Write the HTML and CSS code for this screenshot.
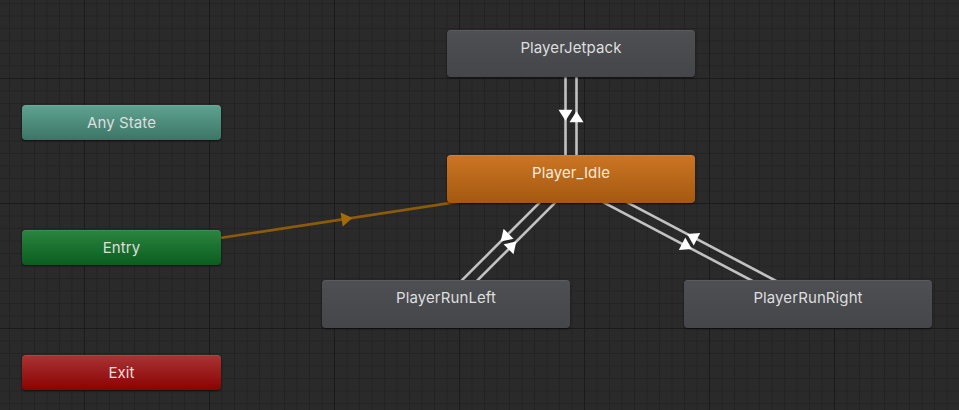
FILE: index.html
```html
<!DOCTYPE html>
<html lang="en">
<head>
    <meta charset="UTF-8">
    <title>Animator - Player</title>
    <link rel="stylesheet" href="styles.css">
</head>
<body>
    <div class="graph">
        <!-- grid + transitions layer -->
        <svg class="edges" width="959" height="410" viewBox="0 0 959 410">
            <defs>
                <pattern id="minor" x="9" y="3" width="12.5" height="12.5" patternUnits="userSpaceOnUse">
                    <rect x="0" y="0" width="1" height="12.5" fill="#232323"/>
                    <rect x="0" y="0" width="12.5" height="1" fill="#232323"/>
                </pattern>
                <pattern id="major" x="84" y="78" width="125" height="125" patternUnits="userSpaceOnUse">
                    <rect x="0" y="0" width="1" height="125" fill="#1b1b1b"/>
                    <rect x="0" y="0" width="125" height="1" fill="#1b1b1b"/>
                </pattern>
            </defs>
            <rect width="959" height="410" fill="url(#minor)" shape-rendering="crispEdges"/>
            <rect width="959" height="410" fill="url(#major)" shape-rendering="crispEdges"/>

            <!-- Entry -> Player_Idle -->
            <line class="entry-line" x1="122.3" y1="252.9" x2="571.8" y2="184.4"/>
            <polygon class="entry-head" points="352.5,217.9 342.7,226.4 340.6,212.6"/>

            <!-- PlayerJetpack <-> Player_Idle -->
            <line class="tr-line" x1="565.5" y1="53.5" x2="565.5" y2="179"/>
            <line class="tr-line" x1="576.5" y1="53.5" x2="576.5" y2="179"/>
            <polygon class="tr-head" points="565.5,120.8 558.5,109.8 572.5,109.8"/>
            <polygon class="tr-head" points="576.5,111.2 569.5,122.2 583.5,122.2"/>

            <!-- Player_Idle <-> PlayerRunLeft -->
            <line class="tr-line" x1="567.1" y1="175.1" x2="442.1" y2="300.1"/>
            <line class="tr-line" x1="449.9" y1="307.9" x2="574.9" y2="182.9"/>
            <polygon class="tr-head" points="500.7,241.5 503.6,228.8 513.5,238.7"/>
            <polygon class="tr-head" points="516.3,241.5 513.5,254.2 503.6,244.3"/>

            <!-- Player_Idle <-> PlayerRunRight -->
            <line class="tr-line" x1="568.4" y1="183.9" x2="805.4" y2="308.9"/>
            <line class="tr-line" x1="810.6" y1="299.1" x2="573.6" y2="174.1"/>
            <polygon class="tr-head" points="691.8,248.9 678.8,250.0 685.3,237.6"/>
            <polygon class="tr-head" points="687.2,234.1 700.2,233.0 693.7,245.4"/>
        </svg>

        <!-- states -->
        <div class="state special any" style="left: 22px; top: 105px;">Any State</div>
        <div class="state special entry" style="left: 22px; top: 230px;">Entry</div>
        <div class="state special exit" style="left: 22px; top: 355px;">Exit</div>

        <div class="state normal short" style="left: 447px; top: 30px;">PlayerJetpack</div>
        <div class="state normal default" style="left: 447px; top: 155px;">Player_Idle</div>
        <div class="state normal" style="left: 322px; top: 280px;">PlayerRunLeft</div>
        <div class="state normal" style="left: 684px; top: 280px;">PlayerRunRight</div>
    </div>
</body>
</html>
```

FILE: styles.css
```css
body { margin: 0; background: #2a2a2a; font-family: Inter, "Noto Sans", sans-serif; }

.graph {
    position: relative;
    width: 959px;
    height: 410px;
    overflow: hidden;
    background-color: #2a2a2a;
}

.edges {
    position: absolute;
    top: 0;
    left: 0;
}

.tr-line {
    stroke: #c2c2c2;
    stroke-width: 2.6;
}

.tr-head { fill: #ffffff; }

.entry-line {
    stroke: #8c5b0a;
    stroke-width: 2.6;
}

.entry-head { fill: #a36c0a; }

/* state nodes */
.state {
    position: absolute;
    box-sizing: border-box;
    border-radius: 4px;
    color: #dedede;
    font-size: 15px;
    letter-spacing: 0.1px;
    line-height: 35px;
    text-align: center;
    box-shadow: 0 1px 2px rgba(0, 0, 0, 0.6), inset 0 1px 0 rgba(255, 255, 255, 0.08);
}

.special {
    width: 199px;
    height: 35px;
}

.normal {
    width: 248px;
    height: 48px;
    background: linear-gradient(#4d4f53, #44464a);
}

.short { height: 47px; }

.default {
    background: linear-gradient(#cc7524, #a45910);
    color: #f2eadf;
}

.any { background: linear-gradient(#5fa391, #3c7565); }
.entry { background: linear-gradient(#2b8540, #0a5d1e); }
.exit { background: linear-gradient(#a93434, #8b0202); color: #f0dede; }
```
